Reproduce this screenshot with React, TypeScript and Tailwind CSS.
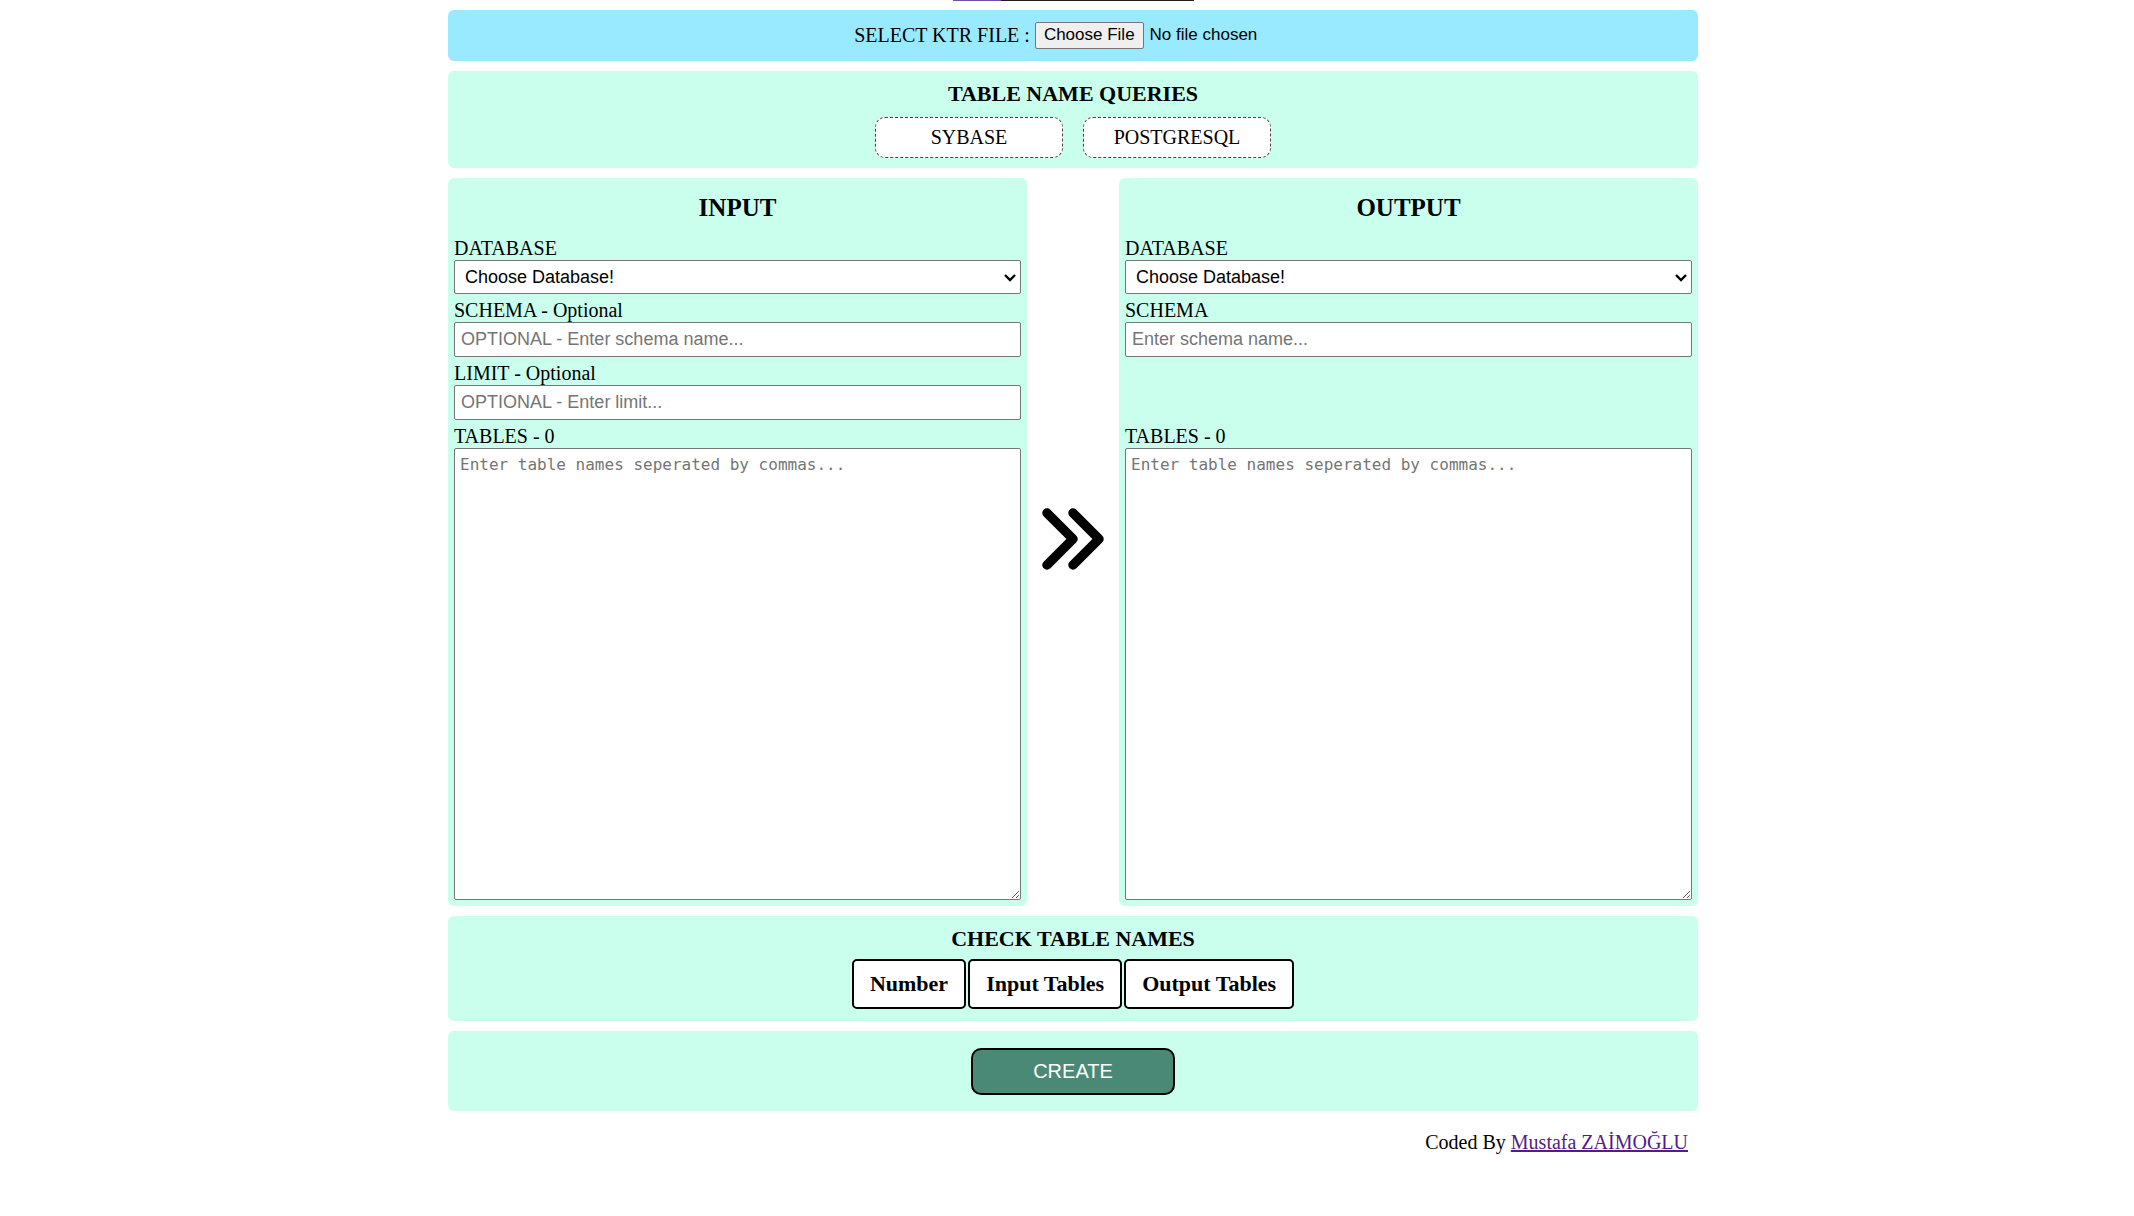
import type { ReactNode } from "react";

const FIELD =
  "w-full rounded-[2px] border border-[#767676] bg-white font-['Liberation_Sans',sans-serif] text-[18px] leading-[21px] text-black placeholder:text-[#757575]";

function Field({ id, label, children }: { id: string; label: string; children: ReactNode }) {
  return (
    <div className="flex flex-col">
      <label htmlFor={id} className="self-start">
        {label}
      </label>
      {children}
    </div>
  );
}

function Panel({ title, id, optional }: { title: string; id: string; optional: boolean }) {
  return (
    <section className="flex min-w-0 flex-1 flex-col gap-[5px] rounded-md bg-[#c9ffec] p-1.5">
      <h2 className="pt-[9px] pb-[9px] text-center text-[25px] leading-[30px] font-bold">{title}</h2>
      <Field id={`${id}-database`} label="DATABASE">
        <div className="relative flex">
          <select id={`${id}-database`} className={`${FIELD} h-[34px] appearance-none px-2.5`}>
            <option>Choose Database!</option>
            <option>SYBASE</option>
            <option>POSTGRESQL</option>
          </select>
          <svg
            viewBox="0 0 12 8"
            className="pointer-events-none absolute top-[14px] right-[5px] h-2 w-3"
            fill="none"
            stroke="black"
            strokeWidth="2.4"
            aria-hidden="true"
          >
            <path d="M1 1l5 5 5-5" />
          </svg>
        </div>
      </Field>
      <Field id={`${id}-schema`} label={optional ? "SCHEMA - Optional" : "SCHEMA"}>
        <input
          id={`${id}-schema`}
          type="text"
          placeholder={optional ? "OPTIONAL - Enter schema name..." : "Enter schema name..."}
          className={`${FIELD} h-[35px] px-1.5`}
        />
      </Field>
      {optional ? (
        <Field id={`${id}-limit`} label="LIMIT - Optional">
          <input
            id={`${id}-limit`}
            type="text"
            placeholder="OPTIONAL - Enter limit..."
            className={`${FIELD} h-[35px] px-1.5`}
          />
        </Field>
      ) : (
        <div className="h-[58px]" />
      )}
      <Field id={`${id}-tables`} label="TABLES - 0">
        <textarea
          id={`${id}-tables`}
          placeholder="Enter table names seperated by commas..."
          className="h-[452px] w-full rounded-[2px] border border-[#767676] bg-white p-[5px] font-['DejaVu_Sans_Mono',monospace] text-[16px] leading-[22px] placeholder:text-[#757575]"
        />
      </Field>
    </section>
  );
}

export default function App() {
  return (
    <div className="min-h-screen bg-white pl-3 font-['Liberation_Serif',serif] text-[20px] leading-[23px] text-black">
      <div className="mx-auto flex max-w-[1250px] flex-col gap-2.5">
        <div className="-mb-px flex h-px justify-center">
          <div className="w-12 bg-[#744da9]" />
          <div className="w-[193px] bg-[#1f1f1f]" />
        </div>

        <section className="flex h-[51px] items-center justify-center gap-[5px] rounded-md bg-[#99eaff]">
          <label htmlFor="ktr">SELECT KTR FILE :</label>
          <input
            id="ktr"
            type="file"
            className="w-[257px] font-['Liberation_Sans',sans-serif] text-[17px] leading-[19px] file:me-1.5 file:h-[27px] file:rounded-[2px] file:border file:border-solid file:border-[#767676] file:bg-[#efefef] file:px-2 file:pt-0 file:pb-0.5"
          />
        </section>

        <section className="flex flex-col items-center gap-2.5 rounded-md bg-[#c9ffec] p-2.5">
          <h2 className="text-[22px] leading-[26px] font-bold">TABLE NAME QUERIES</h2>
          <div className="flex gap-5">
            <button className="h-[41px] w-[188px] rounded-[10px] border border-dashed border-[#444] bg-white">
              SYBASE
            </button>
            <button className="h-[41px] w-[188px] rounded-[10px] border border-dashed border-[#444] bg-white">
              POSTGRESQL
            </button>
          </div>
        </section>

        <div className="flex">
          <Panel title="INPUT" id="input" optional />
          <div className="flex w-[92px] items-center justify-center pb-1.5">
            <svg
              viewBox="0 0 64 64"
              className="size-16"
              fill="none"
              stroke="black"
              strokeWidth="9.5"
              strokeLinecap="round"
              strokeLinejoin="round"
              aria-hidden="true"
            >
              <path d="M6 6l26 26L6 58M32 6l26 26-26 26" />
            </svg>
          </div>
          <Panel title="OUTPUT" id="output" optional={false} />
        </div>

        <section className="flex flex-col items-center gap-[5px] rounded-md bg-[#c9ffec] p-2.5">
          <h2 className="text-[22px] leading-[26px] font-bold">CHECK TABLE NAMES</h2>
          <table className="border-separate border-spacing-[2px] text-[22px] leading-[26px]">
            <thead>
              <tr>
                {["Number", "Input Tables", "Output Tables"].map((heading) => (
                  <th
                    key={heading}
                    scope="col"
                    className="rounded-[5px] border-2 border-black bg-white px-4 py-2.5 font-bold"
                  >
                    {heading}
                  </th>
                ))}
              </tr>
            </thead>
          </table>
        </section>

        <section className="flex h-20 items-center justify-center rounded-md bg-[#c9ffec]">
          <button className="h-[47px] w-[204px] rounded-[10px] border-2 border-black bg-[#4a8975] font-['Liberation_Sans',sans-serif] text-white">
            CREATE
          </button>
        </section>

        <footer className="px-2.5 pt-2.5 text-right">
          Coded By{" "}
          <a href="#author" className="text-[#551a8b] underline decoration-2">
            Mustafa ZAİMOĞLU
          </a>
        </footer>
      </div>
    </div>
  );
}
